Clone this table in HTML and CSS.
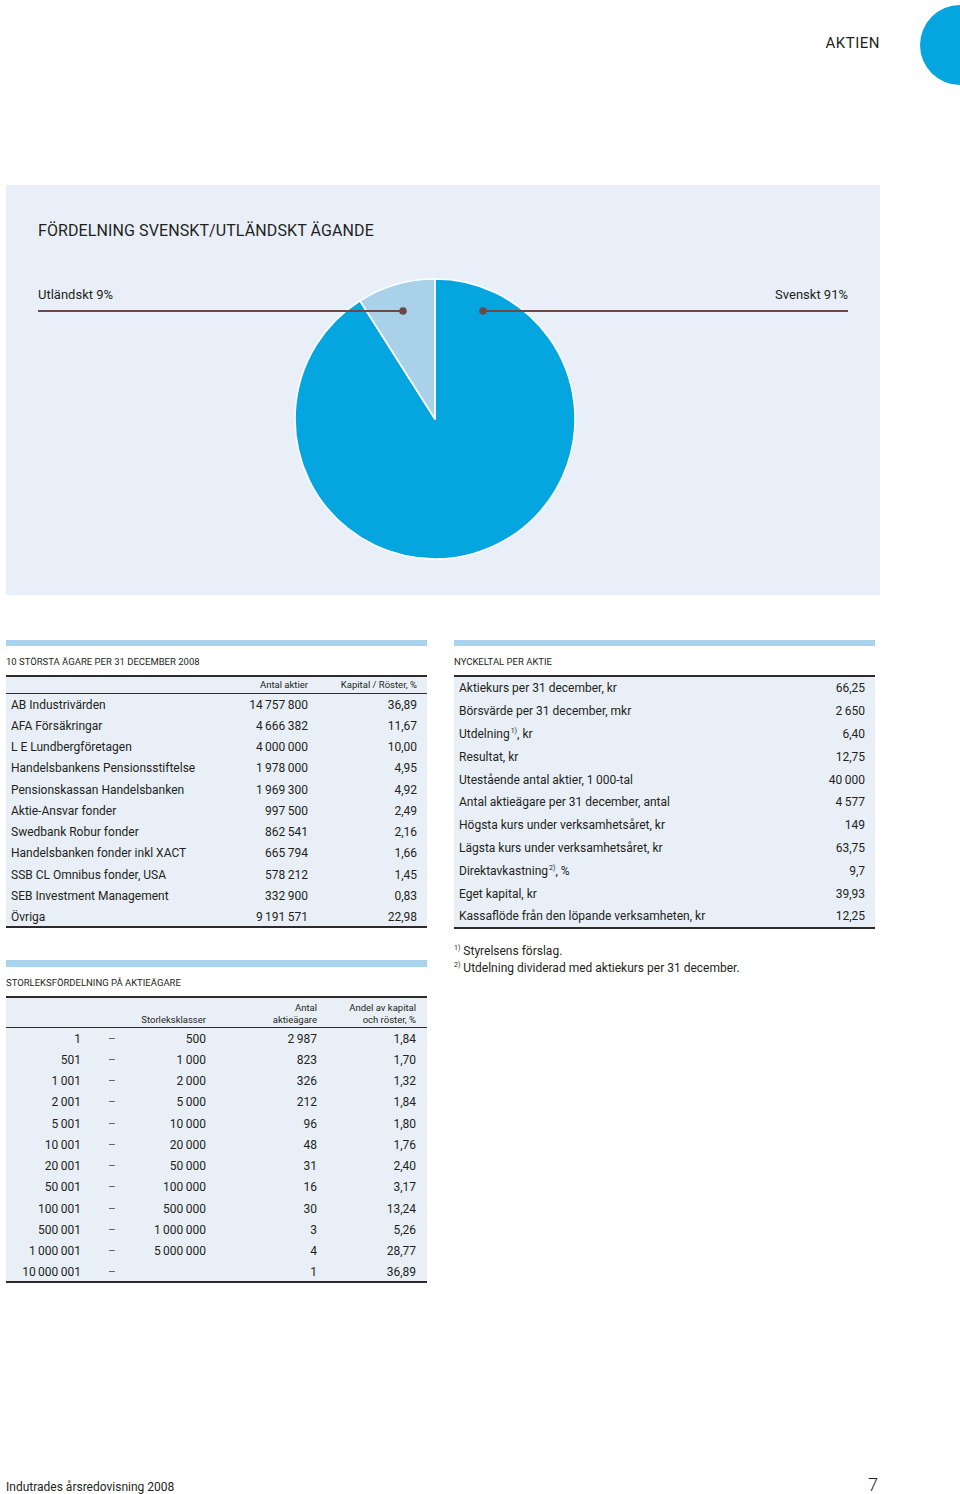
FILE: index.html
```html
<!DOCTYPE html>
<html lang="sv">
<head>
<meta charset="utf-8">
<title>Aktien</title>
<link rel="stylesheet" href="styles.css">
</head>
<body>
<header class="top">
  <span class="section-name">AKTIEN</span>
  <span class="tab"></span>
</header>

<section class="panel">
  <svg class="pie" viewBox="0 0 874 410" width="874" height="410" aria-hidden="true">
    <path d="M429,234 L429,94 A140,140 0 1,1 354,115.8 Z" fill="#05a6df" stroke="#fff" stroke-width="1.6" stroke-linejoin="round"/>
    <path d="M429,234 L354,115.8 A140,140 0 0,1 429,94 Z" fill="#a9d1ea" stroke="#fff" stroke-width="1.6" stroke-linejoin="round"/>
    <line x1="32" y1="126" x2="397" y2="126" stroke="#6a4a48" stroke-width="2"/>
    <circle cx="397" cy="126" r="3.8" fill="#6a4a48"/>
    <line x1="477" y1="126" x2="842" y2="126" stroke="#6a4a48" stroke-width="2"/>
    <circle cx="477" cy="126" r="3.8" fill="#6a4a48"/>
  </svg>
  <h1 class="panel-title">FÖRDELNING SVENSKT/UTLÄNDSKT ÄGANDE</h1>
  <div class="legend">
    <span>Utländskt 9%</span>
    <span>Svenskt 91%</span>
  </div>
</section>

<main class="tables">
  <div class="col">
    <div class="bar"></div>
    <h2 class="cap">10 största ägare per 31 december 2008</h2>
    <table class="t owners">
      <colgroup><col class="c-name"><col class="c-num"><col class="c-pct"></colgroup>
      <thead>
        <tr><th></th><th>Antal aktier</th><th class="last">Kapital / Röster, %</th></tr>
      </thead>
      <tbody>
        <tr><td class="lbl">AB Industrivärden</td><td>14&thinsp;757&thinsp;800</td><td class="last">36,89</td></tr>
        <tr><td class="lbl">AFA Försäkringar</td><td>4&thinsp;666&thinsp;382</td><td class="last">11,67</td></tr>
        <tr><td class="lbl">L E Lundbergföretagen</td><td>4&thinsp;000&thinsp;000</td><td class="last">10,00</td></tr>
        <tr><td class="lbl">Handelsbankens Pensionsstiftelse</td><td>1&thinsp;978&thinsp;000</td><td class="last">4,95</td></tr>
        <tr><td class="lbl">Pensionskassan Handelsbanken</td><td>1&thinsp;969&thinsp;300</td><td class="last">4,92</td></tr>
        <tr><td class="lbl">Aktie-Ansvar fonder</td><td>997&thinsp;500</td><td class="last">2,49</td></tr>
        <tr><td class="lbl">Swedbank Robur fonder</td><td>862&thinsp;541</td><td class="last">2,16</td></tr>
        <tr><td class="lbl">Handelsbanken fonder inkl XACT</td><td>665&thinsp;794</td><td class="last">1,66</td></tr>
        <tr><td class="lbl">SSB CL Omnibus fonder, USA</td><td>578&thinsp;212</td><td class="last">1,45</td></tr>
        <tr><td class="lbl">SEB Investment Management</td><td>332&thinsp;900</td><td class="last">0,83</td></tr>
        <tr><td class="lbl">Övriga</td><td>9&thinsp;191&thinsp;571</td><td class="last">22,98</td></tr>
      </tbody>
    </table>

    <div class="bar bar-second"></div>
    <h2 class="cap">Storleksfördelning på aktieägare</h2>
    <table class="t sizes">
      <colgroup><col class="s1"><col class="s2"><col class="s3"><col class="s4"><col class="s5"></colgroup>
      <thead>
        <tr><th colspan="3">Storleksklasser</th><th>Antal<br>aktieägare</th><th class="last">Andel av kapital<br>och röster, %</th></tr>
      </thead>
      <tbody>
        <tr><td>1</td><td class="dash">–</td><td>500</td><td>2&thinsp;987</td><td class="last">1,84</td></tr>
        <tr><td>501</td><td class="dash">–</td><td>1&thinsp;000</td><td>823</td><td class="last">1,70</td></tr>
        <tr><td>1&thinsp;001</td><td class="dash">–</td><td>2&thinsp;000</td><td>326</td><td class="last">1,32</td></tr>
        <tr><td>2&thinsp;001</td><td class="dash">–</td><td>5&thinsp;000</td><td>212</td><td class="last">1,84</td></tr>
        <tr><td>5&thinsp;001</td><td class="dash">–</td><td>10&thinsp;000</td><td>96</td><td class="last">1,80</td></tr>
        <tr><td>10&thinsp;001</td><td class="dash">–</td><td>20&thinsp;000</td><td>48</td><td class="last">1,76</td></tr>
        <tr><td>20&thinsp;001</td><td class="dash">–</td><td>50&thinsp;000</td><td>31</td><td class="last">2,40</td></tr>
        <tr><td>50&thinsp;001</td><td class="dash">–</td><td>100&thinsp;000</td><td>16</td><td class="last">3,17</td></tr>
        <tr><td>100&thinsp;001</td><td class="dash">–</td><td>500&thinsp;000</td><td>30</td><td class="last">13,24</td></tr>
        <tr><td>500&thinsp;001</td><td class="dash">–</td><td>1&thinsp;000&thinsp;000</td><td>3</td><td class="last">5,26</td></tr>
        <tr><td>1&thinsp;000&thinsp;001</td><td class="dash">–</td><td>5&thinsp;000&thinsp;000</td><td>4</td><td class="last">28,77</td></tr>
        <tr><td>10&thinsp;000&thinsp;001</td><td class="dash">–</td><td></td><td>1</td><td class="last">36,89</td></tr>
      </tbody>
    </table>
  </div>

  <div class="col">
    <div class="bar"></div>
    <h2 class="cap">Nyckeltal per aktie</h2>
    <table class="t keys">
      <colgroup><col class="k1"><col class="k2"></colgroup>
      <tbody>
        <tr><td class="lbl">Aktiekurs per 31 december, kr</td><td class="last">66,25</td></tr>
        <tr><td class="lbl">Börsvärde per 31 december, mkr</td><td class="last">2&thinsp;650</td></tr>
        <tr><td class="lbl">Utdelning<sup>1)</sup>, kr</td><td class="last">6,40</td></tr>
        <tr><td class="lbl">Resultat, kr</td><td class="last">12,75</td></tr>
        <tr><td class="lbl">Utestående antal aktier, 1&thinsp;000-tal</td><td class="last">40&thinsp;000</td></tr>
        <tr><td class="lbl">Antal aktieägare per 31 december, antal</td><td class="last">4&thinsp;577</td></tr>
        <tr><td class="lbl">Högsta kurs under verksamhetsåret, kr</td><td class="last">149</td></tr>
        <tr><td class="lbl">Lägsta kurs under verksamhetsåret, kr</td><td class="last">63,75</td></tr>
        <tr><td class="lbl">Direktavkastning<sup>2)</sup>, %</td><td class="last">9,7</td></tr>
        <tr><td class="lbl">Eget kapital, kr</td><td class="last">39,93</td></tr>
        <tr><td class="lbl">Kassaflöde från den löpande verksamheten, kr</td><td class="last">12,25</td></tr>
      </tbody>
    </table>
    <div class="notes">
      <p><sup>1)</sup> Styrelsens förslag.</p>
      <p><sup>2)</sup> Utdelning dividerad med aktiekurs per 31 december.</p>
    </div>
  </div>
</main>

<footer class="foot">
  <span class="doc">Indutrades årsredovisning 2008</span>
  <span class="page">7</span>
</footer>
</body>
</html>
```

FILE: styles.css
```css
* { box-sizing: border-box; }

html, body { margin: 0; padding: 0; }

body {
  width: 960px;
  height: 1494px;
  overflow: hidden;
  background: #fff;
  color: #231f20;
  font-family: Roboto, "Liberation Sans", sans-serif;
  display: flex;
  flex-direction: column;
  position: relative;
}

/* ---------- header ---------- */
.top {
  height: 185px;
  flex: none;
  display: flex;
  justify-content: flex-end;
  align-items: flex-start;
  padding: 34px 80px 0 0;
}

.section-name {
  font-size: 15px;
  line-height: 18px;
  letter-spacing: 0.5px;
  color: #231f20;
}

.tab {
  position: absolute;
  left: 920px;
  top: 5px;
  width: 80px;
  height: 80px;
  border-radius: 50%;
  background: #05a6df;
}

/* ---------- chart panel ---------- */
.panel {
  position: relative;
  flex: none;
  width: 874px;
  height: 410px;
  margin: 0 6px;
  padding: 36px 32px 0;
  background: #e9eff8;
}

.pie {
  position: absolute;
  left: 0;
  top: 0;
}

.panel-title {
  position: relative;
  margin: 0;
  font-size: 16px;
  line-height: 20px;
  font-weight: 400;
  letter-spacing: 0.1px;
}

.legend {
  position: relative;
  display: flex;
  justify-content: space-between;
  margin-top: 46px;
  font-size: 13px;
  line-height: 16px;
}

/* ---------- tables ---------- */
.tables {
  flex: none;
  display: flex;
  gap: 27px;
  margin: 45px 6px 0;
}

.col {
  width: 421px;
  display: flex;
  flex-direction: column;
}

.bar {
  height: 6px;
  background: #a7d3ec;
}

.bar-second {
  margin-top: 32px;
  height: 7px;
}

.cap {
  margin: 9px 0 0;
  font-size: 9.5px;
  line-height: 14px;
  font-weight: 400;
  text-transform: uppercase;
  letter-spacing: 0;
}

.t {
  width: 421px;
  margin-top: 6px;
  border-collapse: collapse;
  table-layout: fixed;
  background: #e9eff7;
  border-top: 2px solid #2d2a2b;
  border-bottom: 2px solid #2d2a2b;
  font-size: 12px;
}

.t th {
  font-size: 9.5px;
  font-weight: 400;
  text-align: right;
  padding: 0;
  border-bottom: 1px solid #2d2a2b;
  vertical-align: bottom;
}

.t td {
  padding: 1px 0 0;
  text-align: right;
  white-space: nowrap;
  line-height: 14px;
}

.t .lbl {
  text-align: left;
  padding-left: 5px;
}

.t .last {
  padding-right: 10px;
}

.t sup {
  font-size: 7px;
  line-height: 0;
  vertical-align: 5px;
  margin-left: 1px;
}

/* owners table */
.owners .c-name { width: 200px; }
.owners .c-num { width: 102px; }
.owners .c-pct { width: 119px; }
.owners th { height: 16px; line-height: 16px; }
.owners td { height: 21.27px; }

/* key figures */
.keys .k1 { width: 330px; }
.keys .k2 { width: 91px; }
.keys td { height: 22.9px; }

/* size distribution */
.sizes .s1 { width: 75px; }
.sizes .s2 { width: 60px; }
.sizes .s3 { width: 65px; }
.sizes .s4 { width: 111px; }
.sizes .s5 { width: 110px; }
.sizes th { height: 30px; line-height: 12px; padding-bottom: 1px; }
.sizes th.last { padding-right: 11px; }
.sizes td { height: 21.25px; }
.sizes td.last { padding-right: 11px; }
.sizes .dash {
  text-align: left;
  padding-left: 27px;
  color: #666;
}

/* notes */
.notes {
  margin-top: 14px;
  font-size: 12px;
  line-height: 17px;
}

.notes p { margin: 0; }

.notes sup {
  font-size: 7px;
  line-height: 0;
  vertical-align: 5px;
}

/* ---------- footer ---------- */
.foot {
  flex: none;
  margin-top: auto;
  height: 20px;
  display: flex;
  justify-content: space-between;
  align-items: flex-start;
  padding: 0 82px 0 6px;
}

.doc {
  font-size: 12px;
  line-height: 13px;
  margin-top: 7px;
}

.page {
  font-size: 18px;
  font-weight: 300;
  line-height: 18px;
  margin-top: 2px;
}
```
